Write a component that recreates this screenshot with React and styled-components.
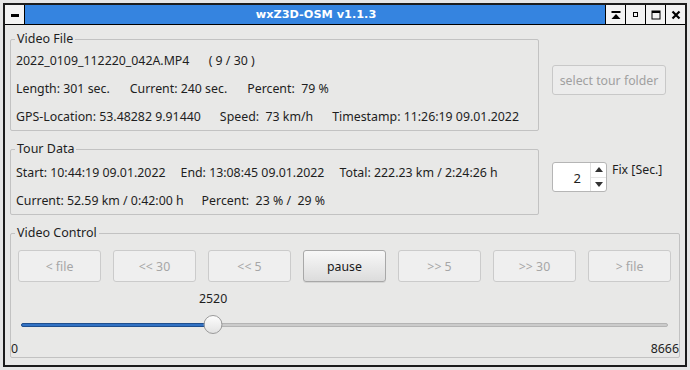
import React from "react";
import styled, { createGlobalStyle } from "styled-components";

const Global = createGlobalStyle`
  html, body { margin: 0; padding: 0; }
  body {
    background: #e6e6e6;
    padding: 3px;
    font-family: "Noto Sans", "Open Sans", sans-serif;
    font-size: 12.35px;
    color: #1e1e1e;
  }
`;

const Win = styled.div`
  width: 684px;
  height: 364px;
  box-sizing: border-box;
  border: 2px solid #1c1c1c;
  background: #e8e8e7;
  display: flex;
  flex-direction: column;
`;

const TitleBar = styled.div`
  height: 20px;
  box-sizing: border-box;
  border-bottom: 1px solid #000;
  display: flex;
`;

const TitleBtn = styled.div`
  width: 20px;
  box-sizing: border-box;
  background: #f3f3f3;
  display: flex;
  align-items: center;
  justify-content: center;
  ${(p) => (p.$left ? "border-right: 1px solid #000;" : "border-left: 1px solid #000;")}
`;

const TitleText = styled.div`
  flex: 1;
  background: #3584e0;
  color: #fff;
  font-family: "DejaVu Sans", sans-serif;
  font-weight: bold;
  font-size: 11.3px;
  display: flex;
  align-items: center;
  justify-content: center;
  padding-left: 2px;
`;

const Content = styled.div`
  flex: 1;
  padding: 14px 5px 0 5px;
  display: grid;
  grid-template-columns: 529px 1fr;
  column-gap: 13px;
  row-gap: 18px;
  align-content: start;
`;

const Group = styled.div`
  position: relative;
  border: 1px solid #c2c2c2;
  border-radius: 2px;
  padding: ${(p) => p.$pad || "0"};
  ${(p) => (p.$span ? "grid-column: 1 / -1;" : "")}
`;

const Legend = styled.span`
  position: absolute;
  top: -9px;
  left: 4px;
  padding: 0 2px;
  background: #e8e8e7;
  line-height: 16px;
  font-size: 12.5px;
  color: #1e1e1e;
`;

const InfoRow = styled.div`
  height: 28px;
  display: flex;
  align-items: center;
  gap: ${(p) => p.$gap || "19px"};
  white-space: pre;
`;

const SideCell = styled.div`
  margin-top: ${(p) => p.$mt};
  display: flex;
  align-items: flex-start;
  gap: 5px;
`;

const FolderButton = styled.button`
  width: 114px;
  height: 30px;
  box-sizing: border-box;
  border: 1px solid #c8c8c8;
  border-radius: 3px;
  background: #ececec;
  color: #a0a0a0;
  font-family: inherit;
  font-size: 12.3px;
  padding: 0;
`;

const Spin = styled.div`
  width: 55px;
  height: 30px;
  box-sizing: border-box;
  border: 1px solid #b5b5b5;
  border-radius: 3px;
  background: #fff;
  display: flex;
`;

const SpinValue = styled.div`
  flex: 1;
  display: flex;
  align-items: center;
  justify-content: flex-end;
  padding-right: 9px;
  padding-top: 1px;
  font-size: 13px;
`;

const SpinArrows = styled.div`
  width: 15px;
  border-left: 1px solid #e0e0e0;
  display: flex;
  flex-direction: column;
`;

const SpinArrow = styled.div`
  flex: 1;
  display: flex;
  align-items: center;
  justify-content: center;
  ${(p) => (p.$top ? "border-bottom: 1px solid #e6e6e6;" : "")}
`;

const FixLabel = styled.span`
  line-height: 16px;
`;

const ButtonRow = styled.div`
  display: flex;
  gap: 12px;
  padding-left: 7px;
`;

const CtrlButton = styled.button`
  width: 83px;
  height: 32px;
  box-sizing: border-box;
  border-radius: 3px;
  font-family: inherit;
  font-size: 12.3px;
  padding: 0;
  border: 1px solid ${(p) => (p.$active ? "#a8a8a8" : "#cbcbcb")};
  background: ${(p) =>
    p.$active ? "linear-gradient(#f8f8f8, #dcdcdc)" : "#efefef"};
  color: ${(p) => (p.$active ? "#1a1a1a" : "#a6a6a6")};
  box-shadow: ${(p) => (p.$active ? "0 1px 0 rgba(0,0,0,0.08)" : "none")};
`;

const SliderArea = styled.div`
  margin: 9px 11px 0 10px;
`;

const ValueRow = styled.div`
  position: relative;
  height: 16px;
`;

const ValueLabel = styled.span`
  position: absolute;
  top: 0;
  line-height: 16px;
  transform: translateX(-50%);
`;

const TrackRow = styled.div`
  position: relative;
  height: 24px;
  margin-top: 6px;
  display: flex;
  align-items: center;
`;

const Track = styled.div`
  position: relative;
  width: 100%;
  height: 4px;
  box-sizing: border-box;
  border: 1px solid #b4b4b4;
  border-radius: 2px;
  background: #cbcbcb;
`;

const Fill = styled.div`
  position: absolute;
  left: -1px;
  top: -1px;
  height: 4px;
  box-sizing: border-box;
  border: 1px solid #1f4f8f;
  border-radius: 2px;
  background: #3272c4;
`;

const Handle = styled.div`
  position: absolute;
  top: 2px;
  width: 19px;
  height: 19px;
  box-sizing: border-box;
  border-radius: 50%;
  border: 1px solid #9a9a9a;
  background: linear-gradient(#fdfdfd, #e2e2e2);
  transform: translateX(-50%);
`;

const RangeRow = styled.div`
  display: flex;
  justify-content: space-between;
  height: 16px;
  line-height: 16px;
  margin-top: 4px;
`;

const Icon = ({ children, w = 10, h = 10 }) => (
  <svg width={w} height={h} viewBox={`0 0 ${w} ${h}`}>
    {children}
  </svg>
);

export default function App() {
  const value = 2520;
  const max = 8666;
  const pct = value / max;
  const pos = `calc(${pct} * (100% - 19px) + 9.5px)`;

  return (
    <>
      <Global />
      <Win>
        <TitleBar>
          <TitleBtn $left>
            <Icon w={10} h={10}>
              <rect x="1" y="4" width="8" height="3" fill="#000" />
            </Icon>
          </TitleBtn>
          <TitleText>wxZ3D-OSM v1.1.3</TitleText>
          <TitleBtn>
            <Icon w={10} h={10}>
              <rect x="0.5" y="1" width="9" height="2" fill="#000" />
              <polygon points="5,4 9.5,9 0.5,9" fill="#000" />
            </Icon>
          </TitleBtn>
          <TitleBtn>
            <Icon w={6} h={6}>
              <rect x="0.5" y="0.5" width="4" height="4" fill="none" stroke="#000" strokeWidth="1" />
            </Icon>
          </TitleBtn>
          <TitleBtn>
            <Icon w={10} h={10}>
              <rect x="1" y="1" width="8" height="8" fill="none" stroke="#000" strokeWidth="1" />
              <rect x="1" y="1" width="8" height="2" fill="#000" />
            </Icon>
          </TitleBtn>
          <TitleBtn>
            <Icon w={10} h={10}>
              <path d="M1.5 1.5 L8.5 8.5 M8.5 1.5 L1.5 8.5" stroke="#000" strokeWidth="2.2" />
            </Icon>
          </TitleBtn>
        </TitleBar>

        <Content>
          <Group $pad="6px 5px 0 5px">
            <Legend>Video File</Legend>
            <InfoRow $gap="0">{"2022_0109_112220_042A.MP4      ( 9 / 30 )"}</InfoRow>
            <InfoRow $gap="20px">
              <span>Length: 301 sec.</span>
              <span>Current: 240 sec.</span>
              <span>Percent:  79 %</span>
            </InfoRow>
            <InfoRow $gap="19px">
              <span>GPS-Location: 53.48282 9.91440</span>
              <span>Speed:  73 km/h</span>
              <span>Timestamp: 11:26:19 09.01.2022</span>
            </InfoRow>
          </Group>
          <SideCell $mt="26px">
            <FolderButton disabled>select tour folder</FolderButton>
          </SideCell>

          <Group $pad="8px 5px 0 5px">
            <Legend>Tour Data</Legend>
            <InfoRow $gap="15px">
              <span>Start: 10:44:19 09.01.2022</span>
              <span>End: 13:08:45 09.01.2022</span>
              <span>Total: 222.23 km / 2:24:26 h</span>
            </InfoRow>
            <InfoRow $gap="18px">
              <span>Current: 52.59 km / 0:42:00 h</span>
              <span>Percent:  23 % /  29 %</span>
            </InfoRow>
          </Group>
          <SideCell $mt="13px">
            <Spin>
              <SpinValue>2</SpinValue>
              <SpinArrows>
                <SpinArrow $top>
                  <Icon w={8} h={5}>
                    <polygon points="4,0 8,5 0,5" fill="#333" />
                  </Icon>
                </SpinArrow>
                <SpinArrow>
                  <Icon w={8} h={5}>
                    <polygon points="0,0 8,0 4,5" fill="#333" />
                  </Icon>
                </SpinArrow>
              </SpinArrows>
            </Spin>
            <FixLabel>Fix [Sec.]</FixLabel>
          </SideCell>

          <Group $span $pad="16px 0 0 0">
            <Legend>Video Control</Legend>
            <ButtonRow>
              <CtrlButton disabled>&lt; file</CtrlButton>
              <CtrlButton disabled>&lt;&lt; 30</CtrlButton>
              <CtrlButton disabled>&lt;&lt; 5</CtrlButton>
              <CtrlButton $active>pause</CtrlButton>
              <CtrlButton disabled>&gt;&gt; 5</CtrlButton>
              <CtrlButton disabled>&gt;&gt; 30</CtrlButton>
              <CtrlButton disabled>&gt; file</CtrlButton>
            </ButtonRow>
            <SliderArea>
              <ValueRow>
                <ValueLabel style={{ left: pos }}>{value}</ValueLabel>
              </ValueRow>
              <TrackRow>
                <Track>
                  <Fill style={{ width: pos }} />
                </Track>
                <Handle style={{ left: pos }} />
              </TrackRow>
            </SliderArea>
            <RangeRow>
              <span>0</span>
              <span>{max}</span>
            </RangeRow>
          </Group>
        </Content>
      </Win>
    </>
  );
}
